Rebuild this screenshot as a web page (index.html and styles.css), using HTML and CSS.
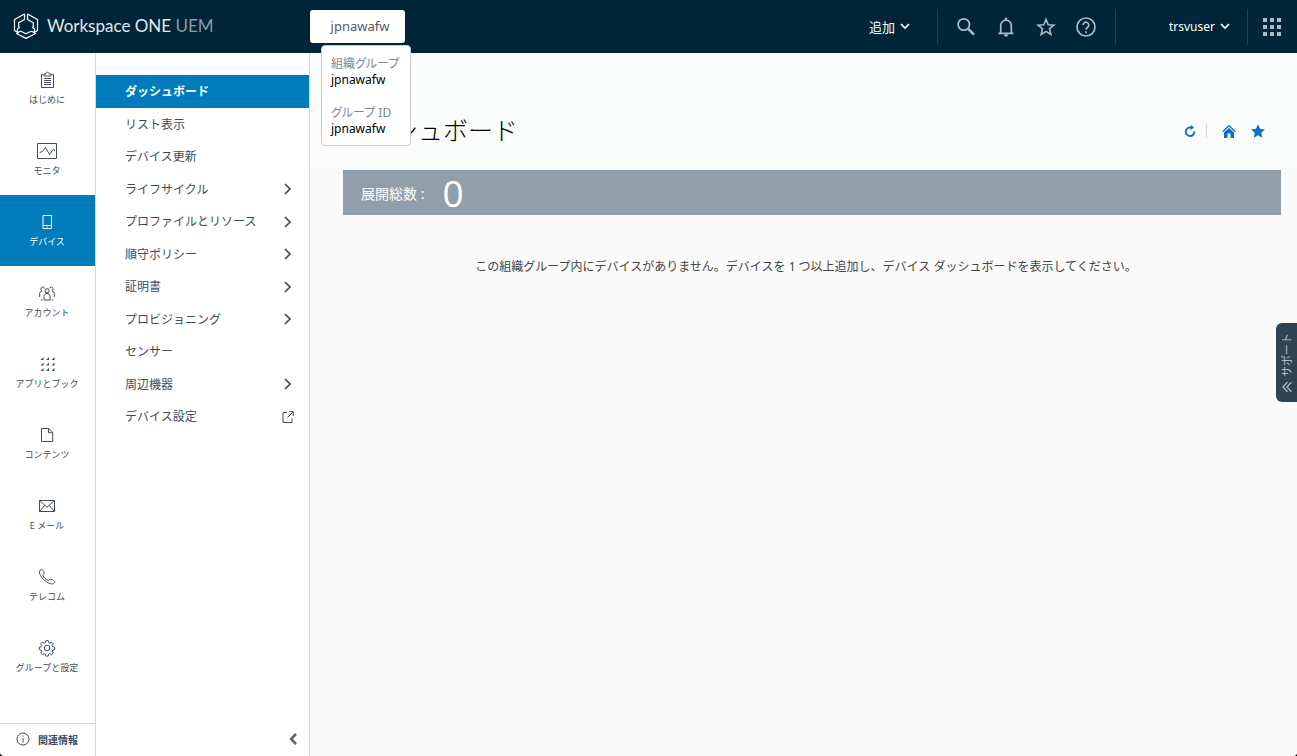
FILE: index.html
```html
<!DOCTYPE html>
<html lang="ja">
<head>
<meta charset="utf-8">
<title>Workspace ONE UEM</title>
<link rel="stylesheet" href="styles.css">
</head>
<body>
<div class="app">
  <header class="topbar">
    <a class="brand" href="#">
      <svg class="brand-mark" viewBox="0 0 26 26" width="26" height="26" fill="none" stroke="#fff" stroke-width="1.2" stroke-linejoin="round"><path d="M11.500 1 1.500 6.500v11l3 1.800v-3.600l2-1.200-.8-1.200V9.700l5.800-3.200z"/><path d="M14.500 1l10 5.500v11l-3 1.800v-3.600l-2-1.200.8-1.200V9.700l-5.800-3.200z"/><path d="m3.500 20.500 9.500 4.900 9.500-4.900-3.700-2.300-2.300.8-3.500 1.800-3.500-1.800-2.300-.8z"/></svg>
      <span>Workspace ONE <span class="brand-sub">UEM</span></span>
    </a>
    <div class="org">
      <button class="org-button" type="button">jpnawafw</button>
      <dl class="org-tip">
        <div><dt>組織グループ</dt><dd>jpnawafw</dd></div>
        <div><dt>グループ ID</dt><dd>jpnawafw</dd></div>
      </dl>
    </div>
    <div class="tools">
      <button class="text-button add" type="button">追加 <svg viewBox="0 0 10 7" width="10" height="7" fill="none" stroke="currentColor" stroke-width="1.7"><path d="m1 1 4 4 4-4"/></svg></button>
      <div class="icon-group">
        <button class="icon-button" type="button" aria-label="検索"><svg viewBox="0 0 20 20" width="20" height="20" fill="none" stroke="currentColor" stroke-width="1.8"><circle cx="7.800" cy="7.500" r="5.700"/><path d="m12 11.700 6 6" stroke-width="2.500"/></svg></button>
        <button class="icon-button" type="button" aria-label="通知"><svg viewBox="0 0 20 20" width="20" height="20" fill="none" stroke="currentColor" stroke-width="1.700"><path d="M2.500 16.300h15M4.700 16V8.500a5.300 5.300 0 0 1 10.600 0V16"/><path d="M10 3V.8M8.200 18.300h3.600" stroke-width="2.200"/></svg></button>
        <button class="icon-button" type="button" aria-label="お気に入り"><svg viewBox="0 0 20 20" width="20" height="20" fill="none" stroke="currentColor" stroke-width="1.600"><path d="m10 2.300 2.200 5.400 5.700.4-4.400 3.700 1.400 5.700-4.900-3.100-4.900 3.100 1.400-5.700-4.400-3.700 5.700-.4z"/></svg></button>
        <button class="icon-button" type="button" aria-label="ヘルプ"><svg viewBox="0 0 20 20" width="20" height="20" fill="none" stroke="currentColor" stroke-width="1.700"><circle cx="10" cy="10" r="9"/><path d="M7.200 8a2.800 2.800 0 1 1 4.600 2.100C10.700 11 10 11.500 10 12.800M10 14.200v2"/></svg></button>
      </div>
      <button class="text-button user" type="button">trsvuser <svg viewBox="0 0 10 7" width="10" height="7" fill="none" stroke="currentColor" stroke-width="1.7"><path d="m1 1 4 4 4-4"/></svg></button>
      <button class="icon-button apps" type="button" aria-label="アプリ"><svg viewBox="0 0 18 18" width="18" height="18" fill="currentColor"><path d="M0 0h4v4H0zM7 0h4v4H7zM14 0h4v4h-4zM0 7h4v4H0zM7 7h4v4H7zM14 7h4v4h-4zM0 14h4v4H0zM7 14h4v4H7zM14 14h4v4h-4z"/></svg></button>
    </div>
  </header>
  <div class="columns">
    <nav class="rail" aria-label="メイン">
      <a class="rail-item" href="#"><svg viewBox="0 0 20 18"><path d="M6.500 3.500h-2v13h12v-13h-2M7 5h7V3h-2c0-2.300-3-2.300-3 0H7zM7 7.500h7M7 9.500h7M7 11.500h7M7 13.500h7"/></svg><span>はじめに</span></a>
      <a class="rail-item" href="#"><svg viewBox="0 0 20 18"><path d="M.5 1.500h19v15H.5zM2.500 10.500l3-1 3-4 4 7 4-5.500 1.500 2"/></svg><span>モニタ</span></a>
      <a class="rail-item active" href="#" aria-current="page"><svg viewBox="0 0 20 18"><path d="M6 2.500h8.500v13H6zM6 12.500h8.500M9.500 14h1"/></svg><span>デバイス</span></a>
      <a class="rail-item" href="#"><svg viewBox="0 0 20 18"><path d="M7 16v-3.500c0-4 6-4 6 0V16zM7.900 6.800a2.100 2.100 0 1 0 4.200 0 2.100 2.100 0 1 0-4.200 0M5.500 16H3.800M2.700 13V9.500C2.700 8 3.700 7.300 5 7.300 3.300 6 3.700 3 5.500 3c1.200 0 1.800.6 2.200 1.400M14.500 16h1.700M17.300 13V9.500c0-1.500-1-2.200-2.300-2.200C16.700 6 16.300 3 14.500 3c-1.200 0-1.800.6-2.200 1.400"/></svg><span>アカウント</span></a>
      <a class="rail-item" href="#"><svg viewBox="0 0 20 18"><path class="solid" d="M6.500 2v3H3.500zM12 2v3H9zM17.500 2v3h-3zM6.500 7.500v3H3.500zM12 7.500v3H9zM17.500 7.500v3h-3zM6.500 13v3H3.500zM12 13v3H9zM17.500 13v3h-3z"/></svg><span>アプリとブック</span></a>
      <a class="rail-item" href="#"><svg viewBox="0 0 20 18"><path d="M4.500 2.500h7.300l3.900 3.900v9.100H4.500zM11.500 2.700v4h4"/></svg><span>コンテンツ</span></a>
      <a class="rail-item" href="#"><svg viewBox="0 0 20 18"><path d="M2.500 3.500h15v11h-15zM2.700 3.700 10 10.200l7.300-6.500M2.700 14.300l5-6M17.300 14.300l-5-6"/></svg><span>E メール</span></a>
      <a class="rail-item" href="#"><svg viewBox="0 0 20 18"><path d="M3 2.500c2-2 3.200-.4 4 1.300.9 1.700-1.700 2-1 3.700.8 2 2.600 3.900 4.500 4.800 1.600.8 2-1.700 3.600-1 2.600 1.200 4.600 2 3.300 3.600C13.500 19.500-.2 7.500 3 2.500z"/></svg><span>テレコム</span></a>
      <a class="rail-item" href="#"><svg viewBox="0 0 20 18"><circle cx="10" cy="9" r="2.800"/><path d="m8.800 1.700h2.400l.5 2 1.100.5 1.800-1.100 1.700 1.700-1.100 1.800.5 1.100 2 .5v2.400l-2 .5-.5 1.100 1.100 1.800-1.700 1.700-1.800-1.100-1.100.5-.5 2H8.800l-.5-2-1.100-.5-1.800 1.100L3.700 14l1.100-1.800-.5-1.100-2-.5V8.200l2-.5.5-1.100-1.100-1.800 1.700-1.700 1.800 1.100 1.100-.5z"/></svg><span>グループと設定</span></a>
      <a class="rail-info" href="#"><svg viewBox="0 0 14 14" width="14" height="14"><circle cx="7" cy="7" r="6"/><path d="M7 3.500v1.200M7 6v4.500"/></svg>関連情報</a>
    </nav>
    <nav class="submenu" aria-label="デバイス">
      <ul>
        <li><a class="current" href="#">ダッシュボード</a></li>
        <li><a href="#">リスト表示</a></li>
        <li><a href="#">デバイス更新</a></li>
        <li><a href="#">ライフサイクル<svg class="chev" viewBox="0 0 12 12"><path d="m3 1 5 5-5 5"/></svg></a></li>
        <li><a href="#">プロファイルとリソース<svg class="chev" viewBox="0 0 12 12"><path d="m3 1 5 5-5 5"/></svg></a></li>
        <li><a href="#">順守ポリシー<svg class="chev" viewBox="0 0 12 12"><path d="m3 1 5 5-5 5"/></svg></a></li>
        <li><a href="#">証明書<svg class="chev" viewBox="0 0 12 12"><path d="m3 1 5 5-5 5"/></svg></a></li>
        <li><a href="#">プロビジョニング<svg class="chev" viewBox="0 0 12 12"><path d="m3 1 5 5-5 5"/></svg></a></li>
        <li><a href="#">センサー</a></li>
        <li><a href="#">周辺機器<svg class="chev" viewBox="0 0 12 12"><path d="m3 1 5 5-5 5"/></svg></a></li>
        <li><a href="#">デバイス設定<svg class="ext" viewBox="0 0 12 12"><path d="M5 1.500H1v10h9V7.500M7 .7h4.300V5M11 1 5.500 6.500"/></svg></a></li>
      </ul>
      <button class="collapse" type="button" aria-label="折りたたむ"><svg viewBox="0 0 8 10" width="8" height="10" fill="none" stroke="currentColor" stroke-width="2.200"><path d="M6.500.7 2.500 5l4 4.300"/></svg></button>
    </nav>
    <main class="content">
      <div class="page-head">
        <h1>ダッシュボード</h1>
        <div class="page-actions">
          <button type="button" aria-label="更新"><svg viewBox="0 0 12 12" width="12" height="12" fill="none" stroke="currentColor" stroke-width="1.900"><path d="M10.400 6.500A4.300 4.300 0 1 1 7 2.500"/><path d="M6.500 0v5l3.700-2.500z" fill="currentColor" stroke="none"/></svg></button>
          <button class="home" type="button" aria-label="ホーム"><svg viewBox="0 0 14 14" width="14" height="14" fill="currentColor"><path d="M7 4 2 8.600V14h3.500V9.500h3V14H12V8.600z"/><path d="M.7 7.700 7 1.700l6.300 6" fill="none" stroke="currentColor" stroke-width="1.200"/></svg></button>
          <button type="button" aria-label="お気に入り"><svg viewBox="0 0 14 14" width="14" height="14" fill="currentColor"><path d="m7 .3 2 4.500 4.900.6-3.600 3.400.9 4.900L7 11.300l-4.200 2.400.9-4.900L.1 5.400 5 4.800z"/></svg></button>
        </div>
      </div>
      <div class="summary"><span>展開総数 :</span><strong>0</strong></div>
      <p class="empty">この組織グループ内にデバイスがありません。デバイスを 1 つ以上追加し、デバイス ダッシュボードを表示してください。</p>
      <button class="support" type="button"><svg viewBox="0 0 10 10" width="10" height="10" fill="none" stroke="currentColor" stroke-width="1.200"><path d="M5.500 0 1 5l4.500 5M9.500 0 5 5l4.500 5"/></svg>サポート</button>
    </main>
  </div>
</div>
</body>
</html>
```
FILE: styles.css
```css
* { box-sizing: border-box; }
html { background: #000; }
body {
  margin: 0;
  font-family: "Noto Sans", "Noto Sans CJK JP", sans-serif;
  font-size: 12px;
  color: #3f4c5b;
}
button {
  font: inherit;
  color: inherit;
  background: none;
  border: 0;
  padding: 0;
}
a { color: inherit; text-decoration: none; }
ul, dl, dd { margin: 0; padding: 0; list-style: none; }
svg { flex: none; display: block; }

.app {
  display: flex;
  flex-direction: column;
  min-height: 100vh;
  background: #fff;
  border-radius: 0 0 4px 4px;
  overflow: hidden;
}

.topbar {
  display: flex;
  background: #002538;
  color: #fff;
}
.brand {
  display: flex;
  align-items: center;
  gap: 8px;
  width: 310px;
  padding: 9px 0 11px 13px;
  font-family: Lato, sans-serif;
  font-size: 17px;
  line-height: 30px;
  color: #e2e8eb;
}
.brand-sub { color: #8c9ba5; }
.org { position: relative; padding: 10px 0; }
.org-button {
  display: block;
  width: 95px;
  height: 33px;
  padding: 0 0 1px 5px;
  background: #fff;
  border-radius: 3px;
  color: #4d5a66;
  font-size: 13px;
}
.org-tip {
  position: absolute;
  z-index: 2;
  top: 45px;
  left: 11px;
  display: grid;
  gap: 17px;
  padding: 10px 11px 8px 9px;
  background: #fff;
  border: 1px solid #ccc;
  border-radius: 4px;
  color: #000;
  line-height: 16px;
  white-space: nowrap;
  font-feature-settings: "palt";
}
.org-tip dt { color: #808990; }

.tools {
  display: flex;
  align-items: center;
  margin-left: auto;
}
.text-button {
  display: flex;
  align-items: center;
  gap: 5px;
  line-height: 18px;
}
.add { padding-right: 27px; font-size: 13px; }
.icon-group {
  display: flex;
  align-items: center;
  gap: 20px;
  height: 36px;
  padding: 0 19px 0 18px;
  border: solid #1f4153;
  border-width: 0 1px;
}
.icon-button { color: #adbbc4; }
.user { padding: 0 17px 0 53px; }
.apps {
  height: 36px;
  padding: 0 16px 0 15px;
  border-left: 1px solid #1f4153;
}

.columns { display: flex; flex: 1; }
.rail {
  display: flex;
  flex-direction: column;
  width: 96px;
  border-right: 1px solid #d7d7d7;
}
.rail-item {
  display: flex;
  flex-direction: column;
  align-items: center;
  gap: 4px;
  height: 71px;
  padding: 18px 1px 0 0;
  font-size: 9px;
  line-height: 13px;
}
.rail-item svg {
  width: 20px;
  height: 18px;
  fill: none;
  stroke: currentColor;
}
.rail-item .solid { fill: currentColor; stroke: none; }
.rail-item.active { background: #007cbb; color: #fff; }
.rail-info {
  display: flex;
  align-items: center;
  gap: 8px;
  height: 33px;
  margin-top: auto;
  padding: 0 0 2px 16px;
  border-top: 1px solid #d7d7d7;
  font-size: 10px;
  font-weight: 700;
}
.rail-info svg { fill: none; stroke: currentColor; }

.submenu {
  display: flex;
  flex-direction: column;
  width: 214px;
  padding-top: 22px;
  border-right: 1px solid #d7d7d7;
}
.submenu a {
  display: flex;
  align-items: center;
  justify-content: space-between;
  padding: 1px 15px 0 29px;
  line-height: 2.625;
}
.submenu a.current {
  background: #007cbb;
  color: #fff;
  font-weight: 700;
}
.submenu svg {
  width: 12px;
  height: 12px;
  fill: none;
  stroke: currentColor;
}
.submenu .chev { stroke-width: 1.7; }
.collapse {
  align-self: flex-end;
  margin: auto 10px 11px 0;
  color: #5b6873;
}

.content {
  position: relative;
  flex: 1;
  min-width: 0;
  padding: 0 16px 0 33px;
  background: #fafafa;
}
.page-head {
  display: flex;
  align-items: center;
  justify-content: space-between;
  margin: 0 -16px 0 -33px;
  padding: 57px 32px 20px 33px;
  background: #fafcfc;
}
h1 {
  margin: 0;
  font-size: 25px;
  font-weight: 300;
  line-height: 40px;
  color: #000;
}
.page-actions {
  display: flex;
  align-items: center;
  gap: 15px;
  padding-top: 2px;
  color: #0f6ecd;
}
.page-actions .home {
  padding-left: 15px;
  margin-left: -5px;
  border-left: 1px solid #d7d7d7;
}
.summary {
  display: flex;
  align-items: center;
  gap: 18px;
  height: 45px;
  padding-left: 18px;
  background: #919faa;
  color: #fff;
  font-size: 14px;
}
.summary strong {
  font-family: "Open Sans", sans-serif;
  font-size: 37px;
  font-weight: 400;
  line-height: 45px;
}
.empty {
  margin: 42px 0 0;
  padding-right: 12px;
  text-align: center;
  line-height: 20px;
  color: #444;
}
.support {
  position: absolute;
  top: 270px;
  right: 0;
  display: flex;
  align-items: center;
  gap: 5px;
  padding: 10px 4px 10px 5px;
  writing-mode: sideways-lr;
  background: #314351;
  border-radius: 6px 0 0 6px;
  color: #b3bdc5;
  font-size: 11px;
  line-height: 12px;
}
```
